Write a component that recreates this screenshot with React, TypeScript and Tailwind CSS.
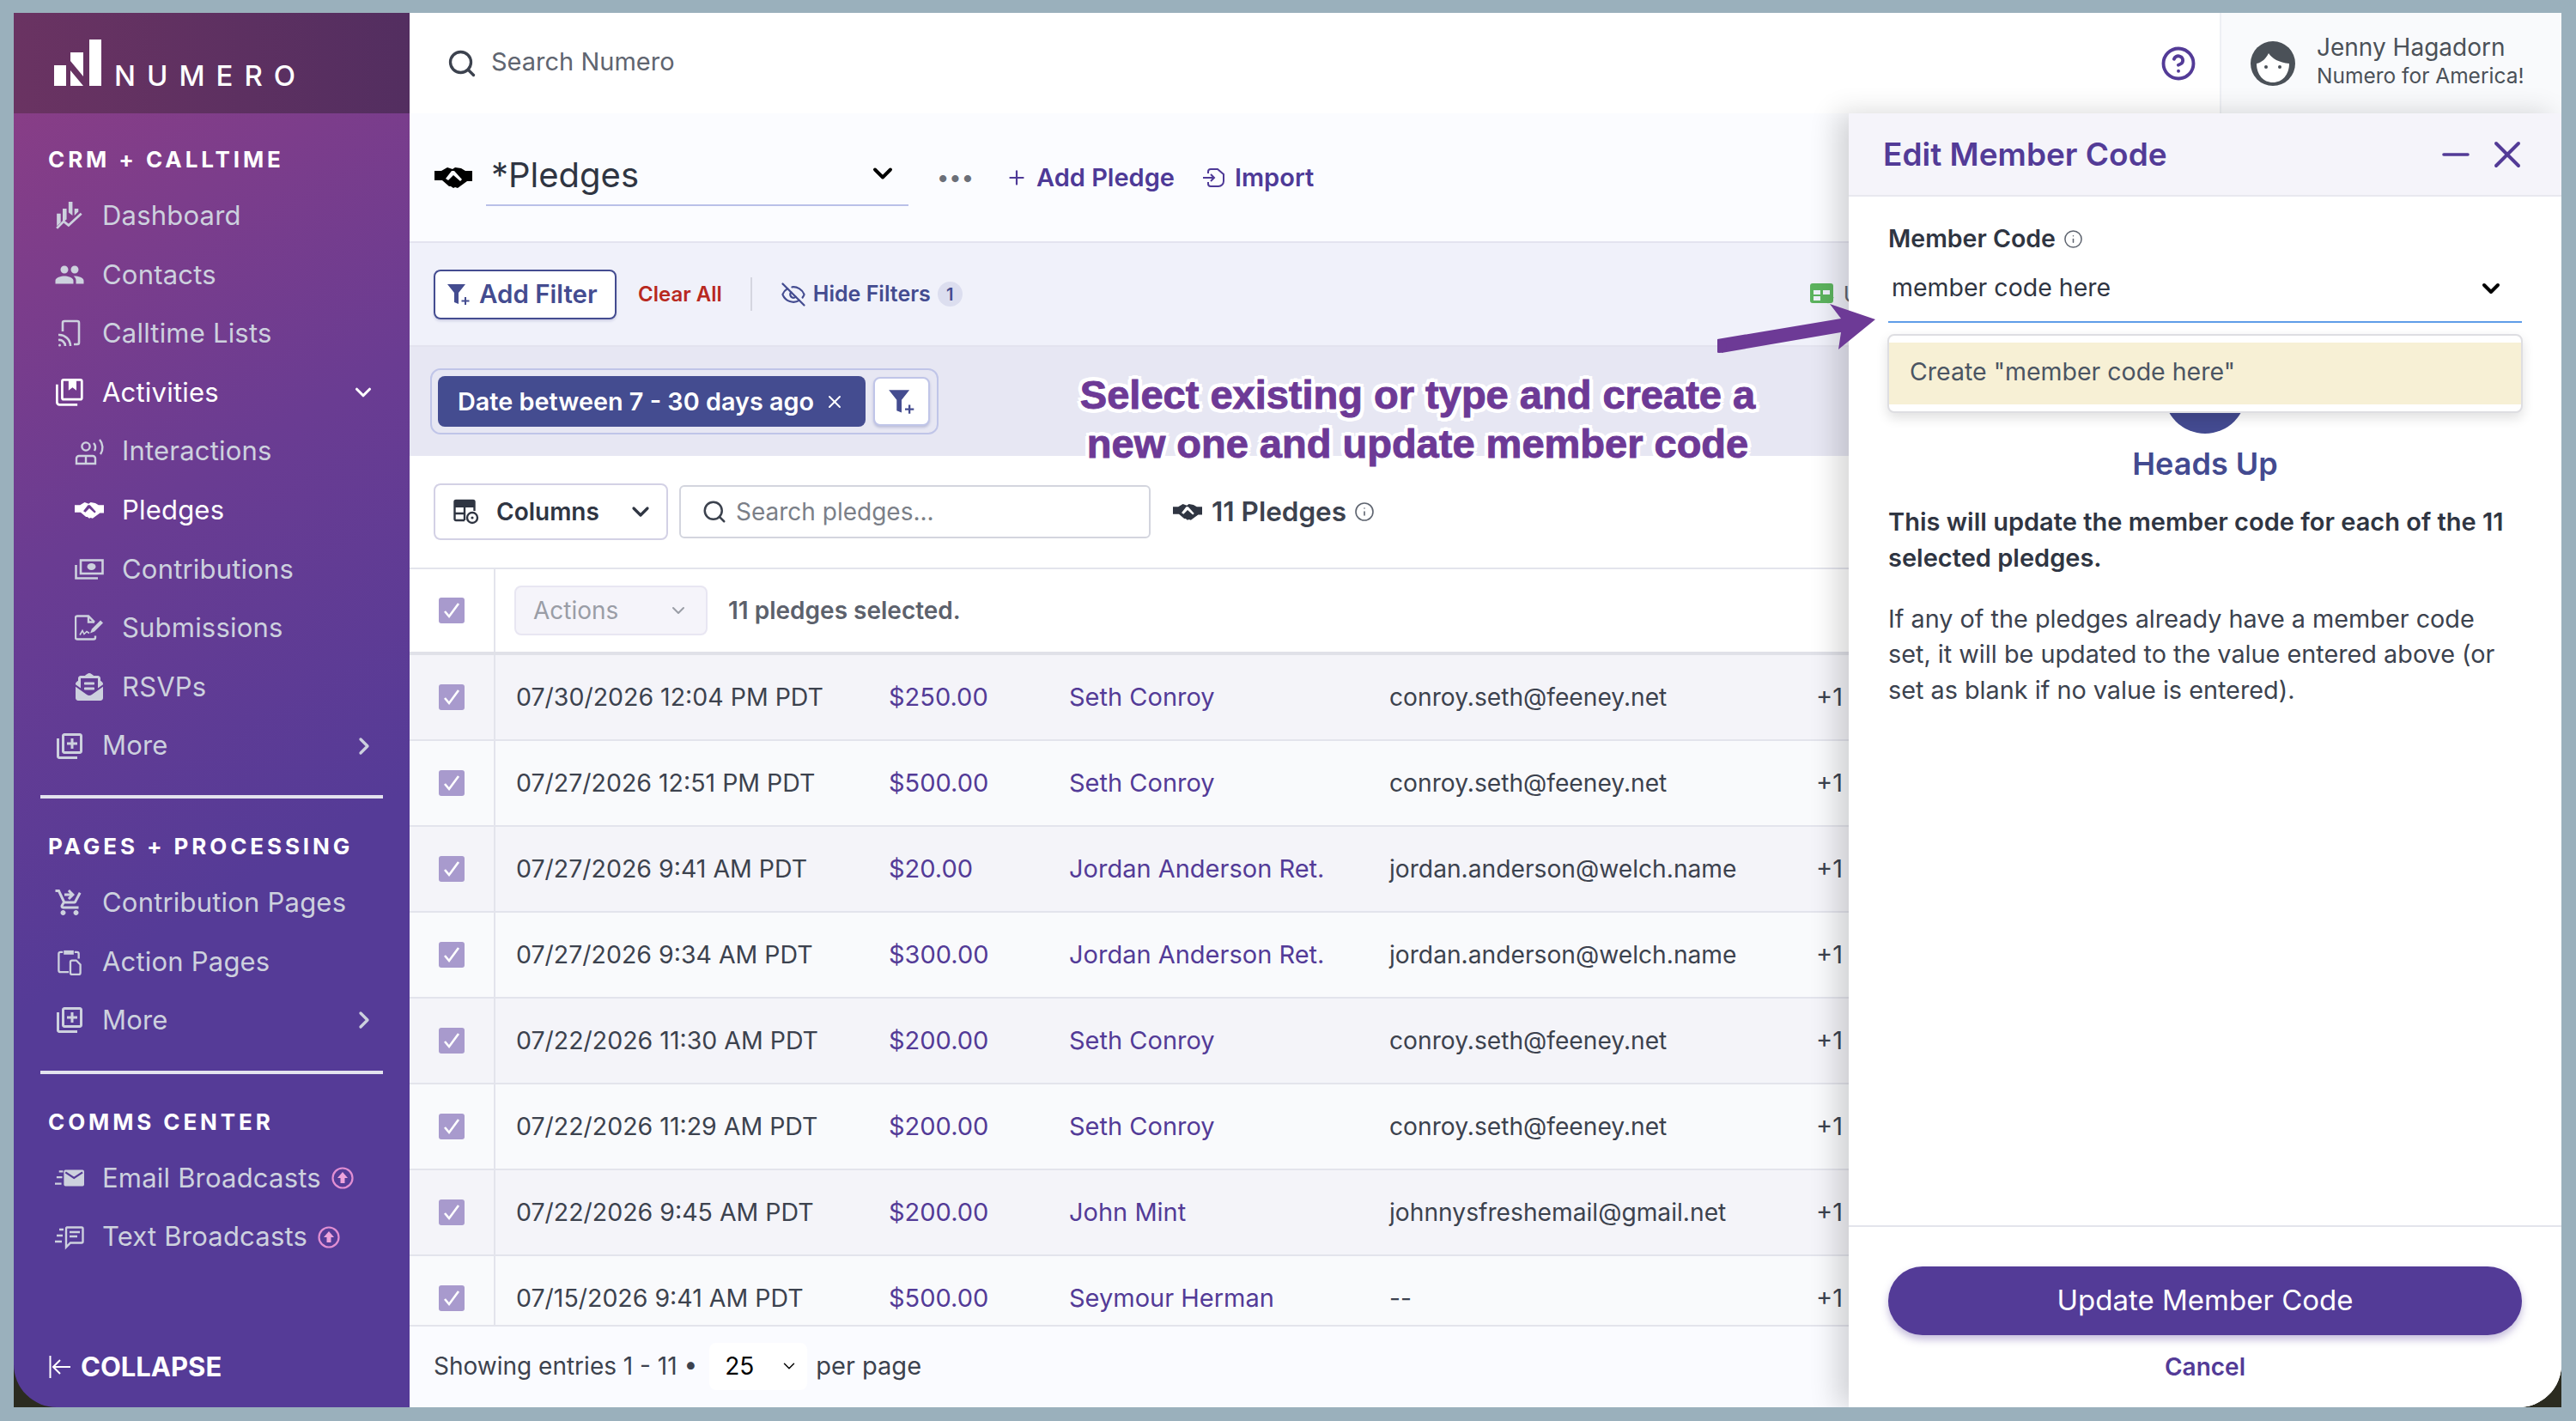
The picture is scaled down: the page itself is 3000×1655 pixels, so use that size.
import React from 'react';
import { ChevronDown, ChevronRight, CircleHelp, EyeOff, Info, Minus, Plus, Search, X } from 'lucide-react';
import { FaEnvelopeOpenText } from 'react-icons/fa';
import { MdOutlineLibraryAdd, MdPeople, MdShoppingCartCheckout } from 'react-icons/md';

type IconProps = { className?: string };

// hand drawn icons, the packages don't have these
const HandshakeIcon = ({ className }: IconProps) => (
  <svg viewBox="0 0 44 25" className={className} fill="currentColor">
    <path
      fillRule="evenodd"
      d="M0 5h8l7-4 6 2 3-2 7 1 5 3h8v12h-6l-11 8-3-1-2 1-3-2-2 0-8-7H0zM13 14l3 2 6-6 8 7 2-2-9-10-3 0z"
    />
  </svg>
);
const DashboardIcon = ({ className }: IconProps) => (
  <svg viewBox="0 0 28 28" className={className} fill="currentColor">
    <path d="M1 12h4v9l-4 4zM7 7h4v11l-4 3zM13 0h4v14l-4-3zM19 7h4v3l-4 4z" />
    <path d="M1 27l7-7 5 4 13-12" fill="none" stroke="currentColor" strokeWidth="2.4" />
  </svg>
);
const CastIcon = ({ className }: IconProps) => (
  <svg viewBox="0 0 26 32" className={className} fill="none" stroke="currentColor" strokeWidth="2.6">
    <path d="M5 14V4a2 2 0 0 1 2-2h15a2 2 0 0 1 2 2v23a2 2 0 0 1-2 2h-4" />
    <path d="M0 18a13 13 0 0 1 14 13M0 24a7 7 0 0 1 8 7" />
    <circle cx="1.5" cy="30" r="1.5" fill="currentColor" stroke="none" />
  </svg>
);
const ActivitiesIcon = ({ className }: IconProps) => (
  <svg viewBox="0 0 28 28" className={className} fill="none" stroke="currentColor" strokeWidth="2.4">
    <rect x="6.5" y="1.2" width="20" height="20" rx="1.5" />
    <path d="M1.2 6v18a2.5 2.5 0 0 0 2.5 2.5H22" />
    <path d="M13 1h8v11l-4-3-4 3z" fill="currentColor" stroke="none" />
  </svg>
);
const InteractionsIcon = ({ className }: IconProps) => (
  <svg viewBox="0 0 34 30" className={className} fill="none" stroke="currentColor" strokeWidth="2.4">
    <circle cx="13" cy="9" r="4.6" />
    <path d="M2 29v-6a3 3 0 0 1 3-3h16a3 3 0 0 1 3 3v6zM13 20v9" />
    <path d="M22 5a8 8 0 0 1 1 9M29 1a14 14 0 0 1 1 17" />
  </svg>
);
const MoneyIcon = ({ className }: IconProps) => (
  <svg viewBox="0 0 34 24" className={className} fill="none" stroke="currentColor" strokeWidth="2.6">
    <rect x="7" y="1.5" width="25.5" height="15.5" />
    <path d="M1.5 7v15.5H27" />
    <ellipse cx="19.5" cy="9" rx="5" ry="4" fill="currentColor" stroke="none" />
  </svg>
);
const SubmissionIcon = ({ className }: IconProps) => (
  <svg viewBox="0 0 34 29" className={className} fill="none" stroke="currentColor" strokeWidth="2.4">
    <path d="M23 8l-7-7H3a2 2 0 0 0-2 2v23a2 2 0 0 0 2 2h19a2 2 0 0 0 2-2v-2" />
    <path d="M16 1v7h7" />
    <path d="M6 23l3-5 2 4 3-3 3 2" strokeWidth="1.6" />
    <path d="M18 21l2-5L30 6l3 3-10 10z" fill="currentColor" stroke="none" />
  </svg>
);
const ClipboardIcon = ({ className }: IconProps) => (
  <svg viewBox="0 0 30 33" className={className} fill="none" stroke="currentColor" strokeWidth="2.4">
    <path d="M7 5H4a2 2 0 0 0-2 2v20a2 2 0 0 0 2 2h10M21 5h3a2 2 0 0 1 2 2v6" />
    <path d="M8 3h12v5H8z" fill="currentColor" stroke="none" />
    <path d="M18 15h5l5 5v10a2 2 0 0 1-2 2h-8a2 2 0 0 1-2-2V17a2 2 0 0 1 2-2z" />
  </svg>
);
const FastMailIcon = ({ className }: IconProps) => (
  <svg viewBox="0 0 36 22" className={className}>
    <path d="M5 3h5M2 10h7M0 18h8" stroke="currentColor" strokeWidth="2.4" fill="none" />
    <rect x="11" y="1" width="25" height="20" rx="2" fill="currentColor" />
    <path d="M13 4l10.5 7L34 4" stroke="#553b97" strokeWidth="2.4" fill="none" />
  </svg>
);
const FastTextIcon = ({ className }: IconProps) => (
  <svg viewBox="0 0 34 26" className={className} fill="none" stroke="currentColor" strokeWidth="2.4">
    <path d="M5 4h5M2 11h7M0 18h8" />
    <path d="M14 1.5h17a1.5 1.5 0 0 1 1.5 1.5v15a1.5 1.5 0 0 1-1.5 1.5H18l-5 5V3A1.5 1.5 0 0 1 14 1.5z" />
    <path d="M17 7h12M17 12h9" />
  </svg>
);
const UpgradeIcon = ({ className }: IconProps) => (
  <svg viewBox="0 0 26 26" className={className}>
    <circle cx="13" cy="13" r="11.5" fill="none" stroke="#e28fd3" strokeWidth="2.2" />
    <path d="M13 6l6 7h-3.5v6h-5v-6H7z" fill="#eea3dc" />
  </svg>
);
const FilterPlus = ({ className }: IconProps) => (
  <svg viewBox="0 0 28 28" className={className} fill="currentColor">
    <path d="M1 2h21l-8 10v13l-5-2V12z" />
    <path d="M22 17v9M17.5 21.5h9" stroke="currentColor" strokeWidth="2" fill="none" />
  </svg>
);
const ColumnsIcon = ({ className }: IconProps) => (
  <svg viewBox="0 0 30 30" className={className} fill="none" stroke="currentColor" strokeWidth="2.4">
    <path d="M13 25H3a1.5 1.5 0 0 1-1.5-1.5v-20A1.5 1.5 0 0 1 3 2h20a1.5 1.5 0 0 1 1.5 1.5V14" />
    <path d="M2 3h22v7H2z" fill="currentColor" stroke="none" />
    <path d="M2 17h11M13 9v16" />
    <circle cx="22" cy="22" r="6" />
    <circle cx="22" cy="22" r="1.6" fill="currentColor" stroke="none" />
  </svg>
);
const GreenTableIcon = ({ className }: IconProps) => (
  <svg viewBox="0 0 29 25" className={className}>
    <rect x="0" y="0" width="27" height="23" rx="3" fill="#5cb35e" />
    <path d="M4 8h8v5H4zM15 8h8v5h-8zM4 15h8v5H4z" fill="#eef0fa" />
    <path d="M18 19l3 3 6-6" stroke="#5cb35e" strokeWidth="2" fill="none" />
  </svg>
);
const AvatarIcon = ({ className }: IconProps) => (
  <svg viewBox="0 0 52 52" className={className}>
    <circle cx="26" cy="26" r="26" fill="#4b5158" />
    <path d="M7 26c6-1 11-6 14-12 4 6 12 11 24 12 0 13-8 22-19 22S7 39 7 26z" fill="#fff" />
    <circle cx="18" cy="30" r="2" fill="#4b5158" />
    <circle cx="34" cy="30" r="2" fill="#4b5158" />
  </svg>
);
const LogoMark = ({ className }: IconProps) => (
  <svg viewBox="0 0 55 54" className={className} fill="#fff">
    <path d="M0 30h14v24H0zM19 15h15v28L19 25zM19 36l15 18H19zM41 0h14v54H41z" />
  </svg>
);

type NavEntry = { icon: React.ComponentType<IconProps>; label: string; sub?: boolean; active?: boolean; chevron?: 'down' | 'right'; upgrade?: boolean; big?: boolean };

const crmItems: NavEntry[] = [
  { icon: DashboardIcon, label: 'Dashboard' },
  { icon: MdPeople, label: 'Contacts', big: true },
  { icon: CastIcon, label: 'Calltime Lists' },
  { icon: ActivitiesIcon, label: 'Activities', active: true, chevron: 'down' },
  { icon: InteractionsIcon, label: 'Interactions', sub: true },
  { icon: HandshakeIcon, label: 'Pledges', sub: true, active: true },
  { icon: MoneyIcon, label: 'Contributions', sub: true },
  { icon: SubmissionIcon, label: 'Submissions', sub: true },
  { icon: FaEnvelopeOpenText, label: 'RSVPs', sub: true },
  { icon: MdOutlineLibraryAdd, label: 'More', chevron: 'right', big: true },
];
const pageItems: NavEntry[] = [
  { icon: MdShoppingCartCheckout, label: 'Contribution Pages', big: true },
  { icon: ClipboardIcon, label: 'Action Pages' },
  { icon: MdOutlineLibraryAdd, label: 'More', chevron: 'right', big: true },
];
const commsItems: NavEntry[] = [
  { icon: FastMailIcon, label: 'Email Broadcasts', upgrade: true },
  { icon: FastTextIcon, label: 'Text Broadcasts', upgrade: true },
];

const pledges = [
  ['07/30/2026 12:04 PM PDT', '$250.00', 'Seth Conroy', 'conroy.seth@feeney.net'],
  ['07/27/2026 12:51 PM PDT', '$500.00', 'Seth Conroy', 'conroy.seth@feeney.net'],
  ['07/27/2026 9:41 AM PDT', '$20.00', 'Jordan Anderson Ret.', 'jordan.anderson@welch.name'],
  ['07/27/2026 9:34 AM PDT', '$300.00', 'Jordan Anderson Ret.', 'jordan.anderson@welch.name'],
  ['07/22/2026 11:30 AM PDT', '$200.00', 'Seth Conroy', 'conroy.seth@feeney.net'],
  ['07/22/2026 11:29 AM PDT', '$200.00', 'Seth Conroy', 'conroy.seth@feeney.net'],
  ['07/22/2026 9:45 AM PDT', '$200.00', 'John Mint', 'johnnysfreshemail@gmail.net'],
  ['07/15/2026 9:41 AM PDT', '$500.00', 'Seymour Herman', '--'],
];

function NavItem({ item }: { item: NavEntry }) {
  const Icon = item.icon;
  return (
    <div className={`flex h-[68.6px] items-center text-[31px] tracking-[0.2px] ${item.active ? 'text-white' : 'text-[#cdd1de]'} ${item.sub ? 'pl-[71px]' : 'pl-[48px]'}`}>
      <div className="mr-[21px] flex h-[36px] w-[34px] shrink-0 items-center justify-center">
        <Icon className={item.big ? 'h-[36px] w-[36px] shrink-0' : 'h-[32px] w-[34px] shrink-0'} />
      </div>
      <span>{item.label}</span>
      {item.upgrade && <UpgradeIcon className="ml-[12px] h-[26px] w-[26px]" />}
      {item.chevron === 'down' && <ChevronDown className="absolute left-[392px] h-[30px] w-[30px]" strokeWidth={2.5} />}
      {item.chevron === 'right' && <ChevronRight className="absolute left-[392px] h-[32px] w-[32px]" strokeWidth={2.5} />}
    </div>
  );
}

function SectionTitle({ children }: { children: React.ReactNode }) {
  return <div className="h-[30px] pl-[40px] text-[26px] leading-[30px] font-bold tracking-[3.9px] text-white">{children}</div>;
}

function Sidebar() {
  return (
    <aside className="flex h-full w-[461px] shrink-0 flex-col overflow-hidden rounded-bl-[50px] bg-[linear-gradient(150deg,#8e3e84_0%,#6a3c92_35%,#553b97_62%)]">
      <div className="flex h-[117px] shrink-0 items-start bg-[linear-gradient(90deg,#6a3362,#532e60)] pl-[47px] pt-[31px]">
        <LogoMark className="h-[54px] w-[55px]" />
        <span className="ml-[15px] mt-[26px] text-[33px] leading-[32px] font-medium tracking-[13px] text-white">NUMERO</span>
      </div>
      <div className="mt-[39px]"><SectionTitle>CRM + CALLTIME</SectionTitle></div>
      <div className="mt-[16px]">{crmItems.map(i => <NavItem key={i.label} item={i} />)}</div>
      <div className="mx-[31px] mt-[23px] h-[4px] shrink-0 bg-[#e3e2ee]" />
      <div className="mt-[41px]"><SectionTitle>PAGES + PROCESSING</SectionTitle></div>
      <div className="mt-[16px]">{pageItems.map(i => <NavItem key={i.label} item={i} />)}</div>
      <div className="mx-[31px] mt-[24px] h-[4px] shrink-0 bg-[#e3e2ee]" />
      <div className="mt-[41px]"><SectionTitle>COMMS CENTER</SectionTitle></div>
      <div className="mt-[16px]">{commsItems.map(i => <NavItem key={i.label} item={i} />)}</div>
      <div className="mt-auto flex items-center pb-[24px] pl-[41px] text-[31px] font-bold text-white">
        <svg viewBox="0 0 26 26" className="mr-[11px] h-[26px] w-[26px]" fill="none" stroke="currentColor" strokeWidth="2">
          <path d="M1.5 0v26M25 13H5M13 5l-8 8 8 8" />
        </svg>
        COLLAPSE
      </div>
    </aside>
  );
}

function Topbar() {
  return (
    <header className="flex h-[117px] shrink-0 items-center bg-white shadow-[0_2px_6px_rgba(0,0,0,0.06)]">
      <Search className="ml-[43px] h-[36px] w-[36px] text-[#3c424e]" strokeWidth={2.2} />
      <span className="mb-[3px] ml-[16px] text-[29px] text-[#5f6570]">Search Numero</span>
      <CircleHelp className="ml-auto mr-[27px] h-[42px] w-[42px] text-[#533b97]" strokeWidth={2.2} />
      <div className="flex h-full w-[398px] items-center border-l-2 border-[#eef0f4] bg-[#f9fafc] pl-[34px]">
        <AvatarIcon className="h-[52px] w-[52px]" />
        <div className="mb-[8px] ml-[25px]">
          <div className="text-[28px] leading-[36px] text-[#4b5158]">Jenny Hagadorn</div>
          <div className="text-[24.5px] leading-[30px] text-[#4b5158]">Numero for America!</div>
        </div>
      </div>
    </header>
  );
}

function TitleRow() {
  return (
    <div className="flex h-[151px] shrink-0 items-center border-b-2 border-[#e3e3ef] bg-[#fbfcff] pl-[28px]">
      <HandshakeIcon className="h-[25px] w-[46px] text-black" />
      <div className="relative ml-[15px] flex h-[66px] w-[492px] items-center border-b-2 border-[#b9c0e8] pb-[3px] pl-[6px]">
        <span className="text-[40px] text-[#2f3542]">*Pledges</span>
        <ChevronDown className="absolute right-[12px] top-[10px] h-[36px] w-[36px] text-black" strokeWidth={2.6} />
      </div>
      <span className="ml-[34px] text-[26px] font-bold tracking-[2px] text-[#6b6f78]">•••</span>
      <div className="ml-[36px] flex items-center text-[29px] font-semibold text-[#4e3a97]">
        <Plus className="mr-[10px] h-[26px] w-[26px]" /> Add Pledge
      </div>
      <div className="ml-[32px] flex items-center text-[29px] font-semibold text-[#4e3a97]">
        <svg viewBox="0 0 26 22" className="mr-[12px] h-[24px] w-[26px]" fill="none" stroke="currentColor" strokeWidth="2">
          <path d="M7 6V4a3 3 0 0 1 3-3h8l7 6v8a6 6 0 0 1-6 6h-9a3 3 0 0 1-3-3v-2M1 11h13M10 7l4 4-4 4" />
        </svg>
        Import
      </div>
    </div>
  );
}

function FilterRow() {
  return (
    <div className="flex h-[121px] shrink-0 items-center border-b-2 border-[#e3e3ef] bg-[#f0f1fa] pl-[28px]">
      <div className="flex h-[58px] w-[213px] items-center rounded-[8px] border-2 border-[#444c90] bg-white pl-[13px] text-[29.5px] font-semibold text-[#444c90] shadow-[0_2px_3px_rgba(68,76,144,0.2)]">
        <FilterPlus className="mr-[10px] h-[28px] w-[28px]" /> Add Filter
      </div>
      <span className="ml-[25px] text-[24px] font-semibold text-[#b8281f]">Clear All</span>
      <div className="ml-[33px] h-[39px] w-[2px] bg-[#d5d6e0]" />
      <EyeOff className="ml-[33px] h-[30px] w-[30px] text-[#444c90]" strokeWidth={1.8} />
      <span className="ml-[8px] text-[25px] font-semibold text-[#444c90]">Hide Filters</span>
      <span className="ml-[8px] flex h-[29px] w-[29px] items-center justify-center rounded-full bg-[#dcdeef] text-[20px] font-semibold text-[#444c90]">1</span>
      <GreenTableIcon className="ml-[987px] h-[25px] w-[29px] shrink-0" />
      {/* rest of this label is hidden behind the panel */}
      <span className="ml-[10px] text-[26px] text-[#5f6570]">U</span>
    </div>
  );
}

function ChipRow() {
  return (
    <div className="flex h-[127px] shrink-0 items-center bg-[#e7e7f3] pl-[24px]">
      <div className="flex h-[77px] items-center gap-[9px] rounded-[12px] border-2 border-[#c0c5e8] pl-[7px] pr-[8px]">
        <div className="flex h-[59px] w-[498px] items-center rounded-[8px] bg-[#444c90] pl-[23px] text-[28.8px] font-semibold text-white">
          Date between 7 - 30 days ago
          <X className="ml-auto mr-[24px] h-[24px] w-[24px]" strokeWidth={2} />
        </div>
        <div className="flex h-[57px] w-[66px] items-center justify-center rounded-[8px] border-2 border-[#c0c5e8] bg-white text-[#444c90] shadow-[0_2px_3px_rgba(68,76,144,0.25)]">
          <FilterPlus className="h-[32px] w-[32px]" />
        </div>
      </div>
    </div>
  );
}

function ControlsRow() {
  return (
    <div className="flex h-[132px] shrink-0 items-center border-b-2 border-[#e3e4ec] bg-white pl-[28px]">
      <div className="flex h-[66px] w-[273px] items-center rounded-[8px] border-2 border-[#d3d1e5] pl-[21px] text-[28px] font-semibold text-[#2f3542]">
        <ColumnsIcon className="mr-[20px] h-[30px] w-[30px]" /> Columns
        <ChevronDown className="ml-auto mr-[14px] h-[32px] w-[32px]" strokeWidth={2.4} />
      </div>
      <div className="ml-[13px] flex h-[62px] w-[549px] items-center rounded-[6px] border-2 border-[#d3d5de] pl-[24px] text-[28px] text-[#7b7f88]">
        <Search className="mr-[10px] h-[30px] w-[30px] text-[#3c424e]" /> Search pledges...
      </div>
      <HandshakeIcon className="ml-[26px] h-[20px] w-[34px] text-[#2f3542]" />
      <span className="ml-[11px] text-[31.5px] font-semibold text-[#3c424e]">11 Pledges</span>
      <Info className="ml-[9px] h-[24px] w-[24px] text-[#5f6570]" strokeWidth={1.6} />
    </div>
  );
}

function Checkbox() {
  return (
    <div className="flex h-[30px] w-[30px] items-center justify-center rounded-[3px] bg-[#a89acd]">
      <svg viewBox="0 0 24 24" className="h-[24px] w-[24px]" fill="none" stroke="#fff" strokeWidth="2.6"><path d="M4 13l5 6L20 4" /></svg>
    </div>
  );
}

function PledgeRow({ row, odd }: { row: string[]; odd: boolean }) {
  return (
    <div className={`flex h-[100px] shrink-0 items-center border-b-2 border-[#e3e4ec] text-[29px] ${odd ? 'bg-[#f4f4f9]' : 'bg-[#f9fafc]'}`}>
      <div className="flex h-full w-[100px] shrink-0 items-center justify-center border-r-2 border-[#e3e4ec]"><Checkbox /></div>
      <div className="w-[458px] shrink-0 pl-[24px] text-[28.5px] text-[#3c424e]">{row[0]}</div>
      <div className="w-[210px] shrink-0 text-[#533b97]">{row[1]}</div>
      <div className="w-[373px] shrink-0 text-[#533b97]">{row[2]}</div>
      <div className="w-[497px] shrink-0 text-[28.2px] text-[#3c424e]">{row[3]}</div>
      <div className="text-[#3c424e]">+1</div>
    </div>
  );
}

function PledgeTable() {
  return (
    <div className="flex min-h-0 flex-1 flex-col overflow-hidden">
      <div className="flex h-[100px] shrink-0 items-center border-b-4 border-[#e0e1e8] bg-white">
        <div className="flex h-full w-[100px] shrink-0 items-center justify-center border-r-2 border-[#e3e4ec]"><Checkbox /></div>
        <div className="ml-[22px] flex h-[58px] w-[225px] items-center rounded-[8px] border-2 border-[#e8e6f2] bg-[#f5f4fa] pl-[20px] text-[28px] text-[#9a9da6]">
          Actions
          <ChevronDown className="ml-auto mr-[20px] h-[24px] w-[24px]" strokeWidth={2} />
        </div>
        <span className="ml-[24px] text-[28px] font-semibold text-[#5c616c]">11 pledges selected.</span>
      </div>
      {pledges.map((row, idx) => <PledgeRow key={idx} row={row} odd={idx % 2 === 0} />)}
    </div>
  );
}

function Footer() {
  return (
    <div className="flex h-[96px] shrink-0 items-center border-t-2 border-[#e3e4ec] bg-[#fafbff] pb-[2px] pl-[28px] text-[28px] text-[#3c424e]">
      Showing entries 1 - 11 •
      <div className="ml-[14px] flex h-[55px] w-[114px] items-center rounded-[8px] bg-white pl-[18px] text-black">
        25
        <ChevronDown className="ml-auto mr-[10px] h-[22px] w-[22px]" strokeWidth={1.6} />
      </div>
      <span className="ml-[10px] text-[29px]">per page</span>
    </div>
  );
}

function EditPanel() {
  return (
    <div className="absolute bottom-0 right-0 top-[117px] z-10 flex w-[830px] flex-col bg-white shadow-[-14px_0_30px_rgba(0,0,0,0.16)]">
      <div className="flex h-[97px] shrink-0 items-center border-b-2 border-[#e8e8ef] bg-[#f5f4fa] pl-[40px] pr-[37px]">
        <span className="text-[37px] font-semibold text-[#533b97]">Edit Member Code</span>
        <Minus className="ml-auto h-[48px] w-[48px] text-[#533b97]" strokeWidth={1.8} />
        <X className="ml-[10px] h-[52px] w-[52px] text-[#533b97]" strokeWidth={1.8} />
      </div>
      <div className="relative flex-1 px-[46px] pt-[28px]">
        <div className="flex items-center text-[28.5px] font-semibold text-[#2f3542]">
          Member Code
          <Info className="ml-[9px] h-[23px] w-[23px] text-[#5f6570]" strokeWidth={1.6} />
        </div>
        <div className="mt-[8px] flex h-[68px] items-center border-b-2 border-[#5f9de8] pb-[10px] pl-[4px] text-[28.5px] text-[#2f3542]">
          member code here
          <ChevronDown className="ml-auto mr-[20px] h-[32px] w-[32px] text-black" strokeWidth={3} />
        </div>
        <div className="absolute left-[45px] right-[45px] top-[160px] z-10 rounded-[8px] border-2 border-[#dedee2] bg-white py-[8px] shadow-[0_6px_14px_rgba(0,0,0,0.12)]">
          <div className="flex h-[72px] items-center bg-[#f7f0d5] pb-[3px] pl-[24px] text-[28.5px] text-[#4b5563]">Create "member code here"</div>
        </div>
        <div className="mt-[33px] flex flex-col items-center">
          <div className="h-[96px] w-[96px] rounded-full bg-[#434a90]" />
          <div className="mt-[8px] text-[36px] font-semibold text-[#434a90]">Heads Up</div>
        </div>
        <p className="mt-[20px] text-[29px] font-semibold leading-[42px] text-[#2f3542]">
          This will update the member code for each of the 11 selected pledges.
        </p>
        <p className="mt-[29px] text-[28.8px] leading-[41.5px] text-[#3c424e]">
          If any of the pledges already have a member code set, it will be updated to the value entered above (or set as blank if no value is entered).
        </p>
      </div>
      <div className="flex h-[212px] shrink-0 flex-col items-center border-t-2 border-[#e3e4ec] px-[46px] pt-[46px]">
        <div className="flex h-[80px] w-full items-center justify-center rounded-full bg-[#533b97] text-[33px] text-white shadow-[0_5px_10px_rgba(83,59,151,0.35)]">Update Member Code</div>
        <div className="mt-[16px] text-[28px] font-semibold text-[#533b97]">Cancel</div>
      </div>
    </div>
  );
}

function Annotation() {
  return (
    <>
      <svg viewBox="0 0 190 65" className="absolute left-[1523px] top-[335px] z-20 h-[65px] w-[190px]" fill="#6d3a96">
        <path d="M0 45L144 21L131 4L184 22L141 57L144 37L5 61Z" />
        <circle cx="3" cy="53" r="8" />
      </svg>
      <div className="absolute left-[766px] top-[416px] z-20 w-[816px] text-center font-['Liberation_Sans',sans-serif] text-[47px] font-bold leading-[57px] text-[#6d3a96] [-webkit-text-stroke:1px_#6d3a96] [text-shadow:5px_0_#fff,-5px_0_#fff,0_5px_#fff,0_-5px_#fff,4px_4px_#fff,-4px_4px_#fff,4px_-4px_#fff,-4px_-4px_#fff]">
        Select existing or type and create a<br />new one and update member code
      </div>
    </>
  );
}

export default function App() {
  return (
    <div className="h-[1655px] w-[3000px] overflow-hidden bg-[#9ab0bc] pb-[16px] pl-[16px] pr-[17px] pt-[15px] font-['Inter',sans-serif]">
      <div className="relative flex h-full bg-[#2b2b20]">
        <Sidebar />
        <main className="relative flex min-w-0 flex-1 flex-col overflow-hidden rounded-br-[50px] bg-white">
          <Topbar />
          <TitleRow />
          <FilterRow />
          <ChipRow />
          <ControlsRow />
          <PledgeTable />
          <Footer />
          <EditPanel />
          <Annotation />
        </main>
      </div>
    </div>
  );
}
